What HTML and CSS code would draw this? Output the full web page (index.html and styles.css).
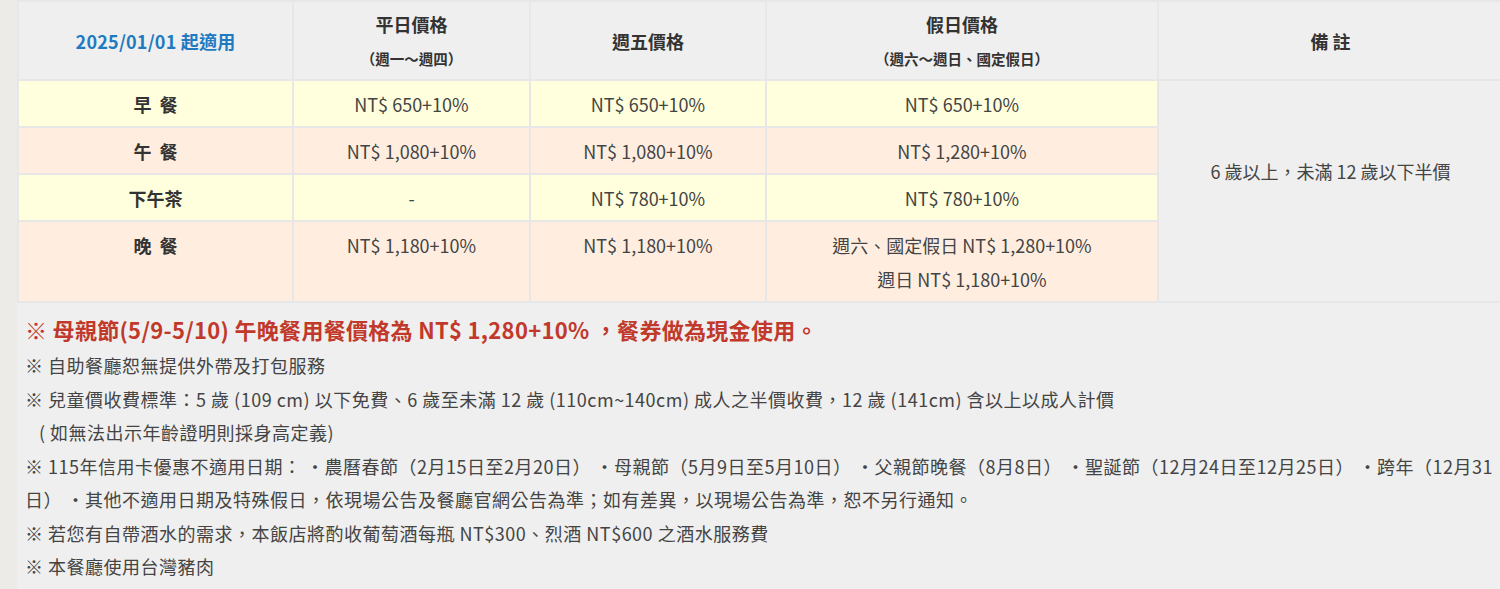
FILE: index.html
```html
<!DOCTYPE html>
<html lang="zh-Hant">
<head>
<meta charset="utf-8">
<title>價格</title>
<link rel="stylesheet" href="styles.css">
</head>
<body>
<div class="page">
  <div class="content">
    <table class="price">
      <colgroup>
        <col class="c1"><col class="c2"><col class="c3"><col class="c4"><col class="c5">
      </colgroup>
      <thead>
        <tr>
          <th class="date">2025/01/01 起適用</th>
          <th class="two"><div class="ttl">平日價格</div><div class="sub">（週一～週四）</div></th>
          <th>週五價格</th>
          <th class="two"><div class="ttl">假日價格</div><div class="sub">（週六～週日、國定假日）</div></th>
          <th>備 註</th>
        </tr>
      </thead>
      <tbody>
        <tr class="y">
          <td class="lbl">早&nbsp;&nbsp;餐</td>
          <td>NT$ 650+10%</td>
          <td>NT$ 650+10%</td>
          <td>NT$ 650+10%</td>
          <td class="note" rowspan="4">6 歲以上，未滿 12 歲以下半價</td>
        </tr>
        <tr class="p">
          <td class="lbl">午&nbsp;&nbsp;餐</td>
          <td>NT$ 1,080+10%</td>
          <td>NT$ 1,080+10%</td>
          <td>NT$ 1,280+10%</td>
        </tr>
        <tr class="y">
          <td class="lbl">下午茶</td>
          <td>-</td>
          <td>NT$ 780+10%</td>
          <td>NT$ 780+10%</td>
        </tr>
        <tr class="p">
          <td class="lbl">晚&nbsp;&nbsp;餐</td>
          <td>NT$ 1,180+10%</td>
          <td>NT$ 1,180+10%</td>
          <td>週六、國定假日 NT$ 1,280+10%<br>週日 NT$ 1,180+10%</td>
        </tr>
      </tbody>
    </table>
    <div class="notes">
      <p class="alert">※ 母親節(5/9-5/10) 午晚餐用餐價格為 NT$ 1,280+10% ，餐券做為現金使用。</p>
      <p>※ 自助餐廳恕無提供外帶及打包服務</p>
      <p>※ 兒童價收費標準：5 歲 (109 cm) 以下免費、6 歲至未滿 12 歲 (110cm~140cm) 成人之半價收費，12 歲 (141cm) 含以上以成人計價</p>
      <p class="indent">( 如無法出示年齡證明則採身高定義)</p>
      <p>※ 115年信用卡優惠不適用日期： ・農曆春節（2月15日至2月20日） ・母親節（5月9日至5月10日） ・父親節晚餐（8月8日） ・聖誕節（12月24日至12月25日） ・跨年（12月31日） ・其他不適用日期及特殊假日，依現場公告及餐廳官網公告為準；如有差異，以現場公告為準，恕不另行通知。</p>
      <p>※ 若您有自帶酒水的需求，本飯店將酌收葡萄酒每瓶 NT$300、烈酒 NT$600 之酒水服務費</p>
      <p>※ 本餐廳使用台灣豬肉</p>
    </div>
  </div>
</div>
</body>
</html>
```
FILE: styles.css
```css
html, body {
  margin: 0;
  padding: 0;
}
body {
  font-family: "Noto Sans CJK TC", "Noto Sans", sans-serif;
  color: #444;
  background: #ecebe8;
}
.page {
  padding-left: 17px;
  height: 589px;
  overflow: hidden;
}
.content {
  background: #efefef;
  height: 100%;
  overflow: hidden;
}
.price {
  border-collapse: collapse;
  table-layout: fixed;
  width: 1487px;
  font-size: 18px;
}
.c1 { width: 275px; }
.c2 { width: 237px; }
.c3 { width: 236px; }
.c4 { width: 392px; }
.price th, .price td {
  border: 2px solid #e7e7e7;
  text-align: center;
  padding: 0;
}
.price th {
  background: #efefef;
  font-weight: 700;
  color: #333;
  vertical-align: middle;
  line-height: 30px;
}
.price th.two {
  vertical-align: top;
  padding-top: 7px;
}
.price th.date {
  color: #1f7bc1;
  letter-spacing: 0.2px;
}
.ttl {
  line-height: 30px;
}
.sub {
  line-height: 40px;
  font-size: 14.5px;
}
.price td {
  vertical-align: top;
  line-height: 34px;
  padding: 6px 0 5px;
  font-weight: 400;
}
.price td.lbl {
  font-weight: 700;
  color: #333;
}
.price tr.y td { background: #ffffdd; }
.price tr.p td { background: #ffeee0; }
.price td.note {
  background: #efefef !important;
  vertical-align: middle;
  padding-bottom: 46px;
}
.notes {
  padding: 6px 0 0 8px;
  font-size: 18px;
  letter-spacing: 0.5px;
}
.notes p {
  margin: 0;
  line-height: 33.5px;
}
.notes p.alert {
  color: #c1392b;
  font-weight: 700;
  font-size: 22px;
  letter-spacing: 0.3px;
  line-height: 40px;
}
.notes p.indent {
  padding-left: 14px;
}
```
